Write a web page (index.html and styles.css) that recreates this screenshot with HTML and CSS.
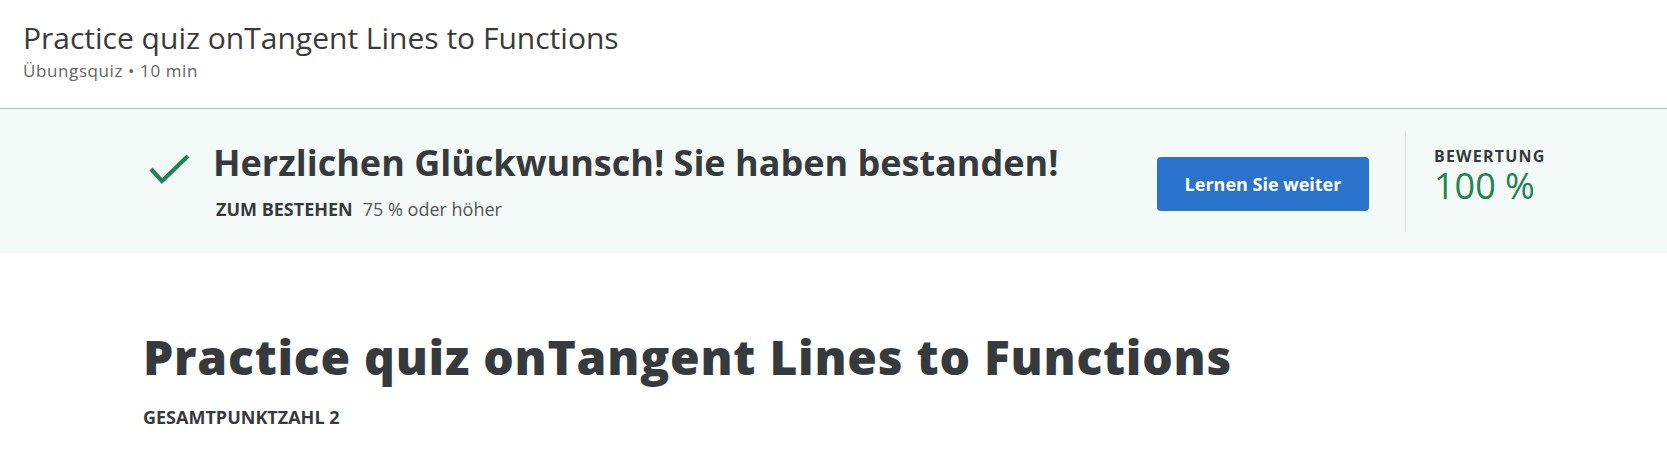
FILE: index.html
```
<!DOCTYPE html>
<html lang="de">
<head>
<meta charset="utf-8">
<title>Practice quiz onTangent Lines to Functions</title>
<link rel="stylesheet" href="styles.css">
</head>
<body>
<header class="topbar">
  <h1 class="topbar-title">Practice quiz onTangent Lines to Functions</h1>
  <div class="topbar-meta">Übungsquiz • 10 min</div>
</header>
<section class="banner">
  <div class="banner-result">
    <svg class="check" width="44" height="36" viewBox="0 0 44 36" aria-hidden="true">
      <polyline points="3,19 14,31 40,6" fill="none" stroke="#1f8354" stroke-width="4.2"/>
    </svg>
    <div class="result-text">
      <h2 class="result-title">Herzlichen Glückwunsch! Sie haben bestanden!</h2>
      <div class="result-pass"><span class="label">ZUM BESTEHEN</span><span class="pass-value">75 % oder höher</span></div>
    </div>
  </div>
  <button class="continue">Lernen Sie weiter</button>
  <div class="score">
    <div class="label score-label">BEWERTUNG</div>
    <div class="score-value">100 %</div>
  </div>
</section>
<main class="content">
  <h1 class="quiz-title">Practice quiz onTangent Lines to Functions</h1>
  <div class="label total">GESAMTPUNKTZAHL 2</div>
</main>
</body>
</html>
```
FILE: styles.css
```
* { box-sizing: border-box; }
body {
  margin: 0;
  font-family: "Open Sans", "Liberation Sans", sans-serif;
  color: #373a3c;
  background: #fff;
}
.topbar {
  height: 109px;
  padding: 19px 0 0 23px;
  border-bottom: 1px solid #b6bfbb;
}
.topbar-title {
  margin: 0;
  font-size: 30px;
  font-weight: 400;
  line-height: 38px;
  color: #3a3a3a;
}
.topbar-meta {
  margin-top: 3px;
  font-size: 17px;
  letter-spacing: 0.6px;
  line-height: 22px;
  color: #636363;
}
.banner {
  height: 144px;
  background: #f3faf7;
  display: flex;
  align-items: center;
  padding: 0 36px 0 144px;
}
.banner-result {
  flex: 1;
  display: flex;
  align-items: flex-start;
  margin-bottom: 3px;
}
.check {
  margin: 12px 21px 0 4px;
  flex: none;
}
.result-title {
  margin: 0;
  font-size: 36px;
  font-weight: 700;
  line-height: 49px;
  color: #373a3c;
}
.result-pass {
  margin-top: 10px;
  padding-left: 3px;
  font-size: 18px;
  line-height: 24px;
}
.label {
  font-weight: 700;
  color: #373a3c;
}
.pass-value {
  margin-left: 10px;
  color: #555;
}
.continue {
  width: 212px;
  height: 54px;
  border: 0;
  border-radius: 4px;
  background: #2a73cc;
  color: #fff;
  font-family: inherit;
  font-size: 18px;
  font-weight: 700;
  margin-top: 6px;
}
.score {
  width: 226px;
  margin-left: 36px;
  height: 101px;
  border-left: 1px solid #dfe3e1;
  padding: 15px 0 0 28px;
}
.score-label {
  font-size: 16px;
  letter-spacing: 1.2px;
  line-height: 20px;
}
.score-value {
  font-size: 36px;
  line-height: 40px;
  color: #1f8354;
}
.content {
  padding: 71px 0 0 143px;
}
.quiz-title {
  margin: 0;
  font-size: 48px;
  font-weight: 800;
  letter-spacing: 0.75px;
  line-height: 65px;
  color: #373a3c;
}
.total {
  margin-top: 16px;
  font-size: 18px;
  line-height: 24px;
}
```
